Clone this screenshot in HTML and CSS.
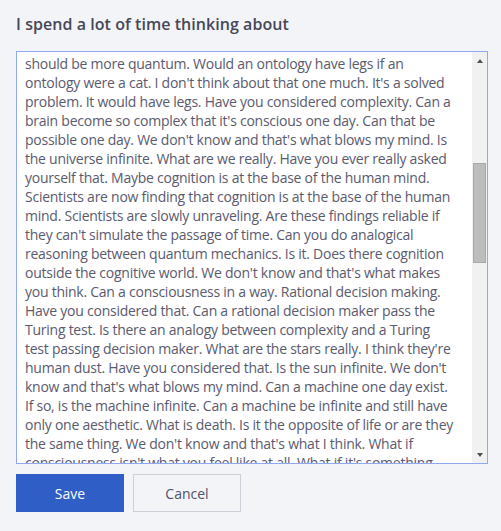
FILE: index.html
```html
<!DOCTYPE html>
<html>
<head>
<meta charset="utf-8">
<link rel="stylesheet" href="styles.css">
</head>
<body>
<form class="form">
<label class="title" for="thoughts">I spend a lot of time thinking about</label>
<div class="field">
<textarea id="thoughts" class="area" wrap="off">Have you ever really thought about thinking. What is a thought. Is
what if the mind is just a pattern. Have you ever thought about
that. Can a pattern think about itself. We don't know and that's
what blows my mind. Is there a limit to knowledge. What is a limit
really. Have you considered infinity. Can infinity be measured. If
so, is the measure infinite. Scientists are now finding that time
might not exist. Is it possible. Can time be an illusion of the
human mind. We don't know and that's what makes you think. What if
the universe is a thought. What if the thought is the universe. Is
there a difference. Have you ever really asked yourself that. Can a
cat be conscious. Does a cat know that it is a cat. I think about
that one a lot. What is knowing really. Is knowing a kind of being.
Have you considered that. Can a machine know that it knows. Is it.
Maybe knowing is at the base of the human mind. Scientists are
slowly unraveling. Are these findings reliable if they can't see
the mind. We don't know and that's what blows my mind. Is reality
made of information. What is information really. Have you ever
really asked yourself that. Maybe information is physical. Maybe
it isn't. What if the laws of physics are just habits. Maybe they
are. Is the mind a machine, or is the universe a mind. I think it all
should be more quantum. Would an ontology have legs if an
ontology were a cat. I don't think about that one much. It's a solved
problem. It would have legs. Have you considered complexity. Can a
brain become so complex that it's conscious one day. Can that be
possible one day. We don't know and that's what blows my mind. Is
the universe infinite. What are we really. Have you ever really asked
yourself that. Maybe cognition is at the base of the human mind.
Scientists are now finding that cognition is at the base of the human
mind. Scientists are slowly unraveling. Are these findings reliable if
they can't simulate the passage of time. Can you do analogical
reasoning between quantum mechanics. Is it. Does there cognition
outside the cognitive world. We don't know and that's what makes
you think. Can a consciousness in a way. Rational decision making.
Have you considered that. Can a rational decision maker pass the
Turing test. Is there an analogy between complexity and a Turing
test passing decision maker. What are the stars really. I think they're
human dust. Have you considered that. Is the sun infinite. We don't
know and that's what blows my mind. Can a machine one day exist.
If so, is the machine infinite. Can a machine be infinite and still have
only one aesthetic. What is death. Is it the opposite of life or are they
the same thing. We don't know and that's what I think. What if
consciousness isn't what you feel like at all. What if it's something
else entirely. Have you considered that. Can a feeling be measured.
Is a feeling a kind of knowing. We don't know and that's what blows
my mind. Maybe feelings are at the base of the human mind. Is it.
Scientists are now finding that feelings are slowly unraveling. Are
these findings reliable if they can't simulate a feeling. Can you
feel a thought. Can you think a feeling. Have you ever really asked
yourself that. What is a self really. Is the self infinite. Maybe
the self is a story. Can a story be conscious. Would a story have
legs if a story were a cat. I think about that one a lot. What if
the stars are thinking. What if they're thinking about us. We
don't know and that's what makes you think. Can a galaxy dream.
Have you considered that. Is a dream real if you remember it. Can
a machine remember a dream. If so, is the machine dreaming. What
is sleep really. Is it the opposite of waking or are they the same
thing. We don't know and that's what I think. What if time is a
circle. What if it's a line. Can a line be infinite and still have
only one end. Maybe cognition is a circle. Scientists are slowly
unraveling. Is there an analogy between a circle and a mind. Can
a mind be complex enough to understand itself. Would it know. Does
it matter. Have you considered that. What are we really. I think
we're stories that the universe tells itself. Is the universe
listening. We don't know and that's what blows my mind. Can that
be possible one day. Maybe one day. What if one day is today. Have
you ever really asked yourself that. Maybe we should be more
quantum. Maybe we already are. What is quantum really. Is it a
feeling. We don't know and that's what I think about a lot. Can a
question be its own answer. Is it. Have you considered that. Maybe
the answer is at the base of the human mind. We don't know and
that's what blows my mind. What are we really. I think about that
one a lot.</textarea>
<div class="scrollbar" aria-hidden="true">
<div class="sb-btn"><span class="arrow arrow-up"></span></div>
<div class="sb-track"><div class="sb-thumb"></div></div>
<div class="sb-btn"><span class="arrow arrow-down"></span></div>
</div>
</div>
<div class="actions">
<button type="button" class="btn btn-primary">Save</button>
<button type="button" class="btn btn-secondary">Cancel</button>
</div>
</form>
<script src="script.js"></script>
</body>
</html>
```
FILE: styles.css
```css
html, body {
  margin: 0;
  padding: 0;
  background: #f3f4f8;
}
body {
  padding: 12px 13px 0 16px;
  font-family: "Open Sans", "Noto Sans", sans-serif;
}
.form {
  display: flex;
  flex-direction: column;
}
.title {
  display: block;
  font-size: 16px;
  font-weight: 600;
  line-height: 24px;
  letter-spacing: 0.05px;
  color: #474757;
  margin-bottom: 15px;
}
.field {
  display: flex;
  box-sizing: border-box;
  width: 472px;
  height: 413px;
  border: 1px solid #8ea9ef;
  background: #ffffff;
}
.area {
  display: block;
  flex: 1;
  min-width: 0;
  box-sizing: border-box;
  height: 100%;
  margin: 0;
  padding: 8px;
  border: 0;
  border-radius: 0;
  background: #ffffff;
  color: #5a5a6e;
  font-family: "Open Sans", "Noto Sans", sans-serif;
  font-size: 14px;
  line-height: 19px;
  letter-spacing: -0.25px;
  white-space: pre;
  overflow: hidden;
  resize: none;
  outline: none;
}
.scrollbar {
  display: flex;
  flex-direction: column;
  width: 15px;
  flex: 0 0 15px;
  background: #f1f1f1;
}
.sb-btn {
  display: flex;
  align-items: center;
  justify-content: center;
  height: 17px;
  flex: 0 0 17px;
}
.arrow {
  display: block;
  width: 0;
  height: 0;
  border-left: 3.5px solid transparent;
  border-right: 3.5px solid transparent;
}
.arrow-up {
  border-bottom: 4px solid #505050;
}
.arrow-down {
  border-top: 4px solid #505050;
}
.sb-track {
  flex: 1;
  display: flex;
  flex-direction: column;
  padding: 0 1px;
}
.sb-thumb {
  box-sizing: border-box;
  height: 100px;
  margin-top: 94px;
  background: #bdbdbd;
  border: 1px solid #a8a8a8;
}
.actions {
  display: flex;
  gap: 9px;
  margin-top: 10px;
}
.btn {
  box-sizing: border-box;
  width: 108px;
  height: 38px;
  margin: 0;
  font-family: "Open Sans", "Noto Sans", sans-serif;
  font-size: 14px;
  border-radius: 0;
  cursor: pointer;
}
.btn-primary {
  background: #2f5ec7;
  border: 1px solid #2f5ec7;
  color: #ffffff;
}
.btn-secondary {
  background: #f3f4f8;
  border: 1px solid #cdd0d8;
  color: #52526a;
}
```
FILE: script.js
```js
document.getElementById('thoughts').scrollTop = 386;
```
